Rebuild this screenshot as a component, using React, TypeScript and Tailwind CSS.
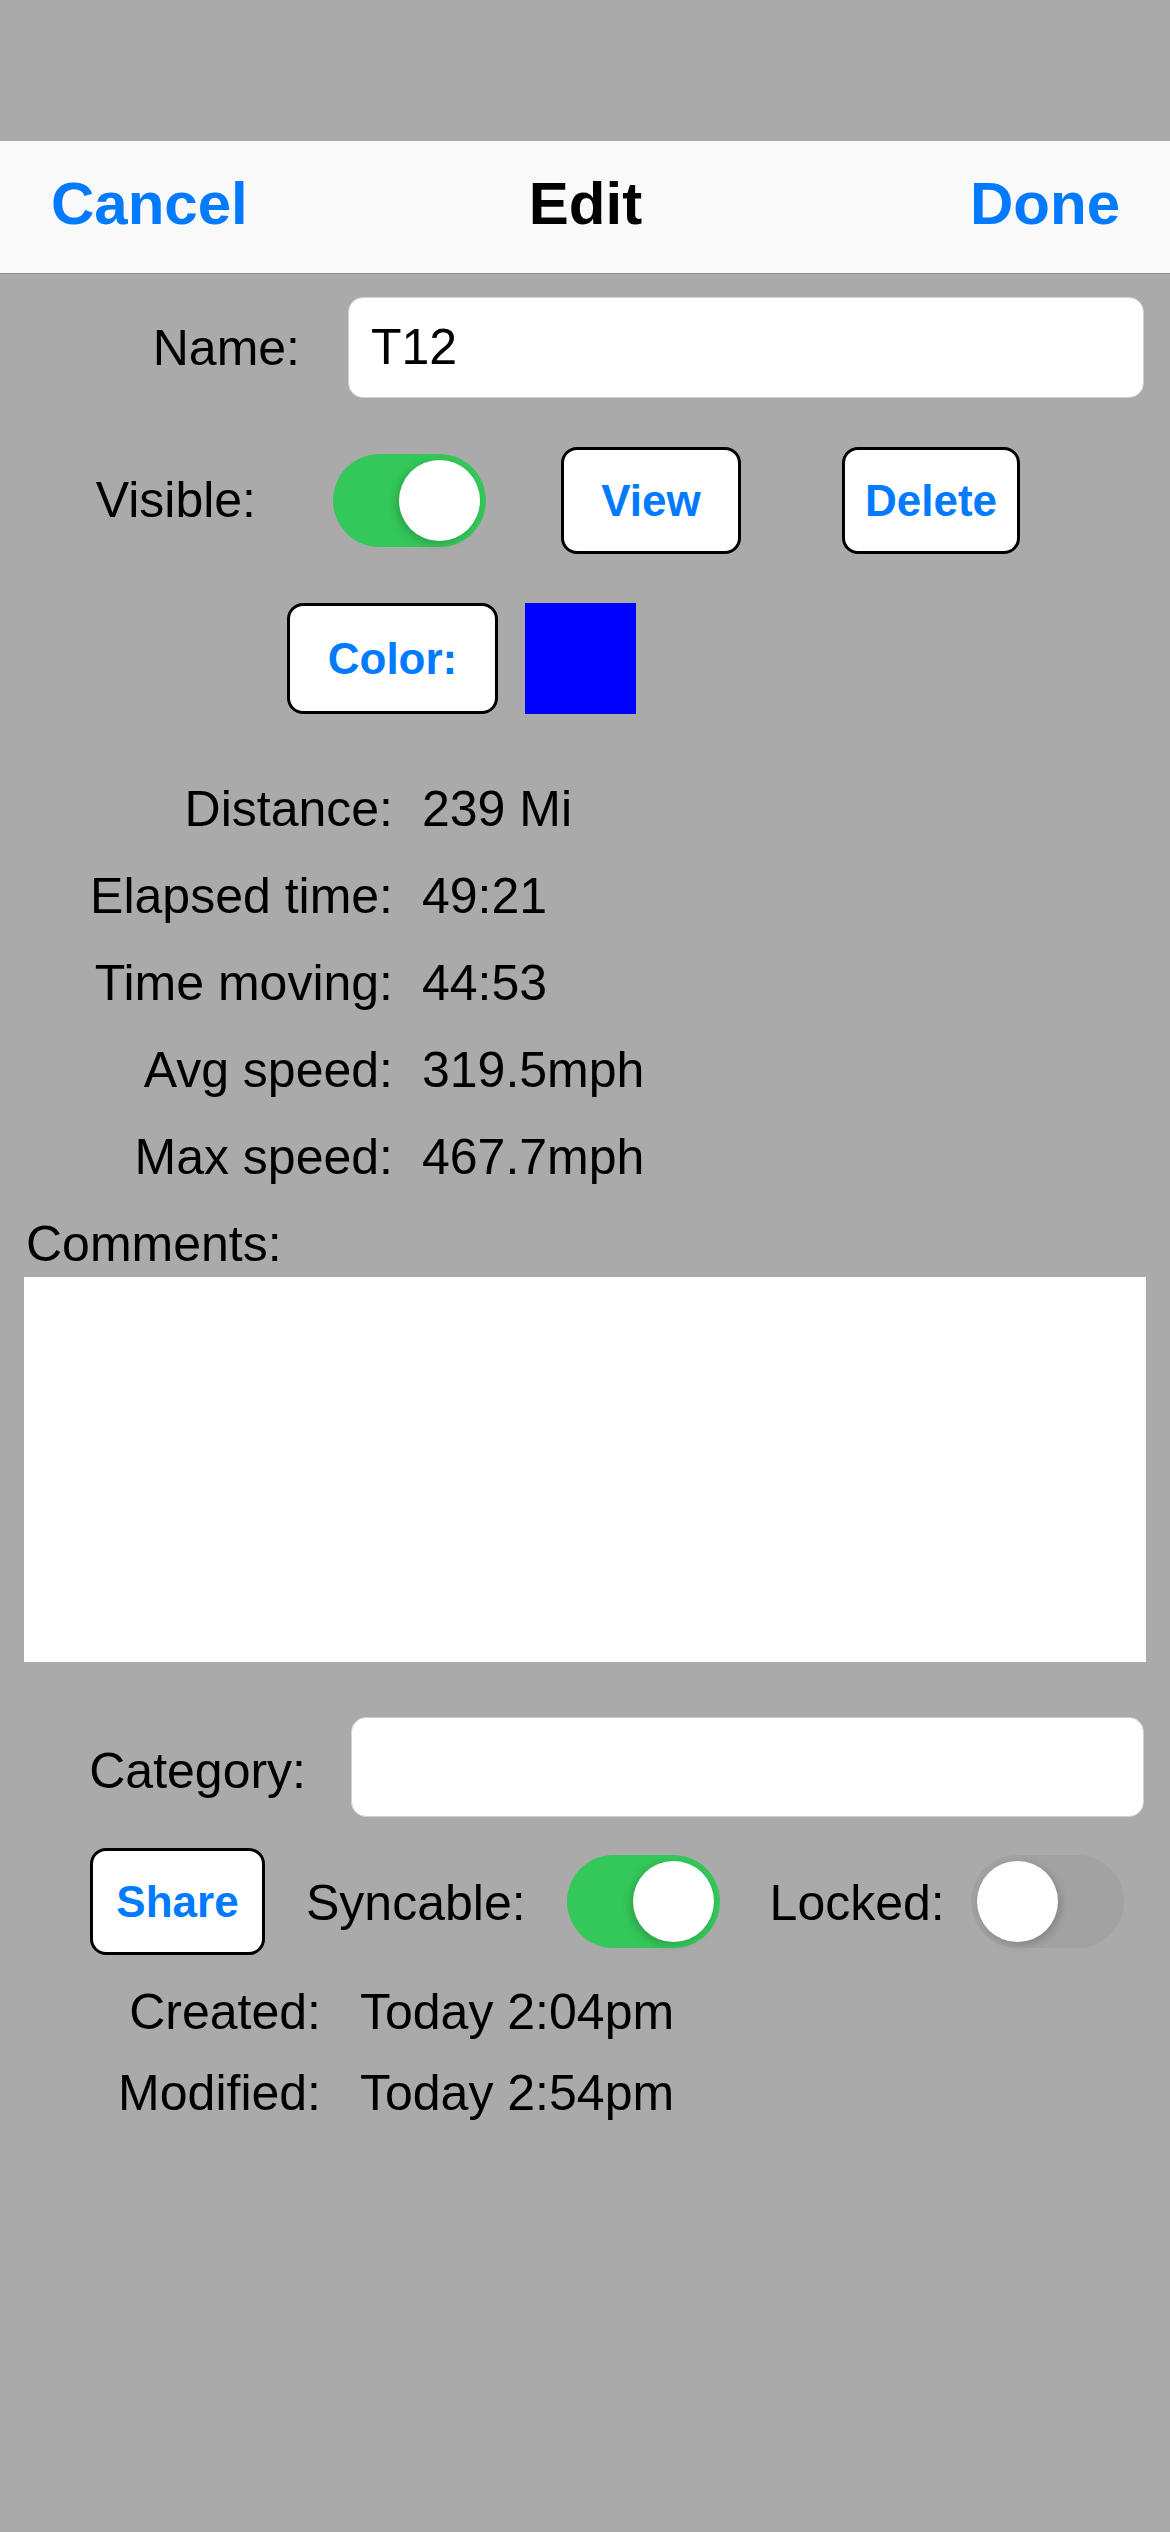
import React from "react"

function Toggle({ on }: { on: boolean }) {
  return (
    <div
      className={
        on
          ? "relative h-[93px] w-[153px] shrink-0 rounded-full bg-[#34c759]"
          : "relative h-[93px] w-[153px] shrink-0 rounded-full bg-[#a2a2a2]"
      }
    >
      <div
        className={
          on
            ? "absolute right-[6px] top-[6px] h-[81px] w-[81px] rounded-full bg-white shadow-[-3px_3px_8px_rgba(0,0,0,0.18)]"
            : "absolute left-[6px] top-[6px] h-[81px] w-[81px] rounded-full bg-white shadow-[3px_3px_8px_rgba(0,0,0,0.18)]"
        }
      />
    </div>
  )
}

function OutlineButton({ label, className }: { label: string; className: string }) {
  return (
    <button
      className={
        "flex shrink-0 items-center justify-center rounded-[16px] border-[3px] border-black bg-white text-[44px] font-bold text-[#007aff] " +
        className
      }
    >
      {label}
    </button>
  )
}

const stats = [
  ["Distance:", "239 Mi"],
  ["Elapsed time:", "49:21"],
  ["Time moving:", "44:53"],
  ["Avg speed:", "319.5mph"],
  ["Max speed:", "467.7mph"],
]

export default function App() {
  return (
    <div className="min-h-[2532px] w-[1170px] bg-[#aaaaaa] font-['Liberation_Sans',Arial,sans-serif] text-[50px] text-black">
      <div className="h-[141px]" />

      {/* nav bar */}
      <div className="grid h-[133px] grid-cols-3 items-center border-b border-[#8a8a8a] bg-[#f9f9f9] pb-[7px] pl-[51px] pr-[50px] text-[60px] font-bold">
        <span className="text-[#007aff]">Cancel</span>
        <span className="text-center text-black">Edit</span>
        <span className="text-right text-[#007aff]">Done</span>
      </div>

      {/* name */}
      <div className="mt-[23px] flex items-center">
        <div className="w-[300px] pt-[2px] text-right">Name:</div>
        <div className="ml-[48px] flex h-[101px] w-[796px] items-center rounded-[15px] border border-[#d0d0d0] bg-white pl-[22px]">
          T12
        </div>
      </div>

      {/* visible / view / delete */}
      <div className="mt-[49px] flex h-[107px] items-center">
        <div className="w-[256px] text-right">Visible:</div>
        <div className="ml-[77px]">
          <Toggle on />
        </div>
        <OutlineButton label="View" className="ml-[75px] h-[107px] w-[180px]" />
        <OutlineButton label="Delete" className="ml-[101px] h-[107px] w-[178px]" />
      </div>

      {/* color */}
      <div className="mt-[49px] flex h-[111px] items-center pl-[287px]">
        <OutlineButton label="Color:" className="h-[111px] w-[211px]" />
        <div className="ml-[27px] h-[111px] w-[111px] bg-[#0000ff]" />
      </div>

      {/* stats */}
      <div className="mt-[52px]">
        {stats.map(([k, v]) => (
          <div key={k} className="flex h-[87px] items-center leading-[87px]">
            <div className="w-[393px] text-right">{k}</div>
            <div className="ml-[29px]">{v}</div>
          </div>
        ))}
      </div>

      {/* comments */}
      <div className="mt-[13px] pl-[26px] leading-[60px]">Comments:</div>
      <div className="ml-[24px] mt-[3px] h-[385px] w-[1122px] bg-white" />

      {/* category */}
      <div className="mt-[55px] flex h-[100px] items-center">
        <div className="w-[306px] pt-[8px] text-right">Category:</div>
        <div className="ml-[45px] h-[100px] w-[793px] rounded-[15px] border border-[#d0d0d0] bg-white" />
      </div>

      {/* share / syncable / locked */}
      <div className="mt-[31px] flex h-[107px] items-center pl-[90px]">
        <OutlineButton label="Share" className="h-[107px] w-[175px]" />
        <div className="ml-[41px] pt-[3px]">Syncable:</div>
        <div className="ml-[41px]">
          <Toggle on />
        </div>
        <div className="ml-[50px] pt-[3px]">Locked:</div>
        <div className="ml-[26px]">
          <Toggle on={false} />
        </div>
      </div>

      {/* dates */}
      <div className="mt-[17px]">
        <div className="flex h-[81px] items-center">
          <div className="w-[321px] text-right">Created:</div>
          <div className="ml-[39px]">Today 2:04pm</div>
        </div>
        <div className="flex h-[81px] items-center">
          <div className="w-[321px] text-right">Modified:</div>
          <div className="ml-[39px]">Today 2:54pm</div>
        </div>
      </div>
    </div>
  )
}
